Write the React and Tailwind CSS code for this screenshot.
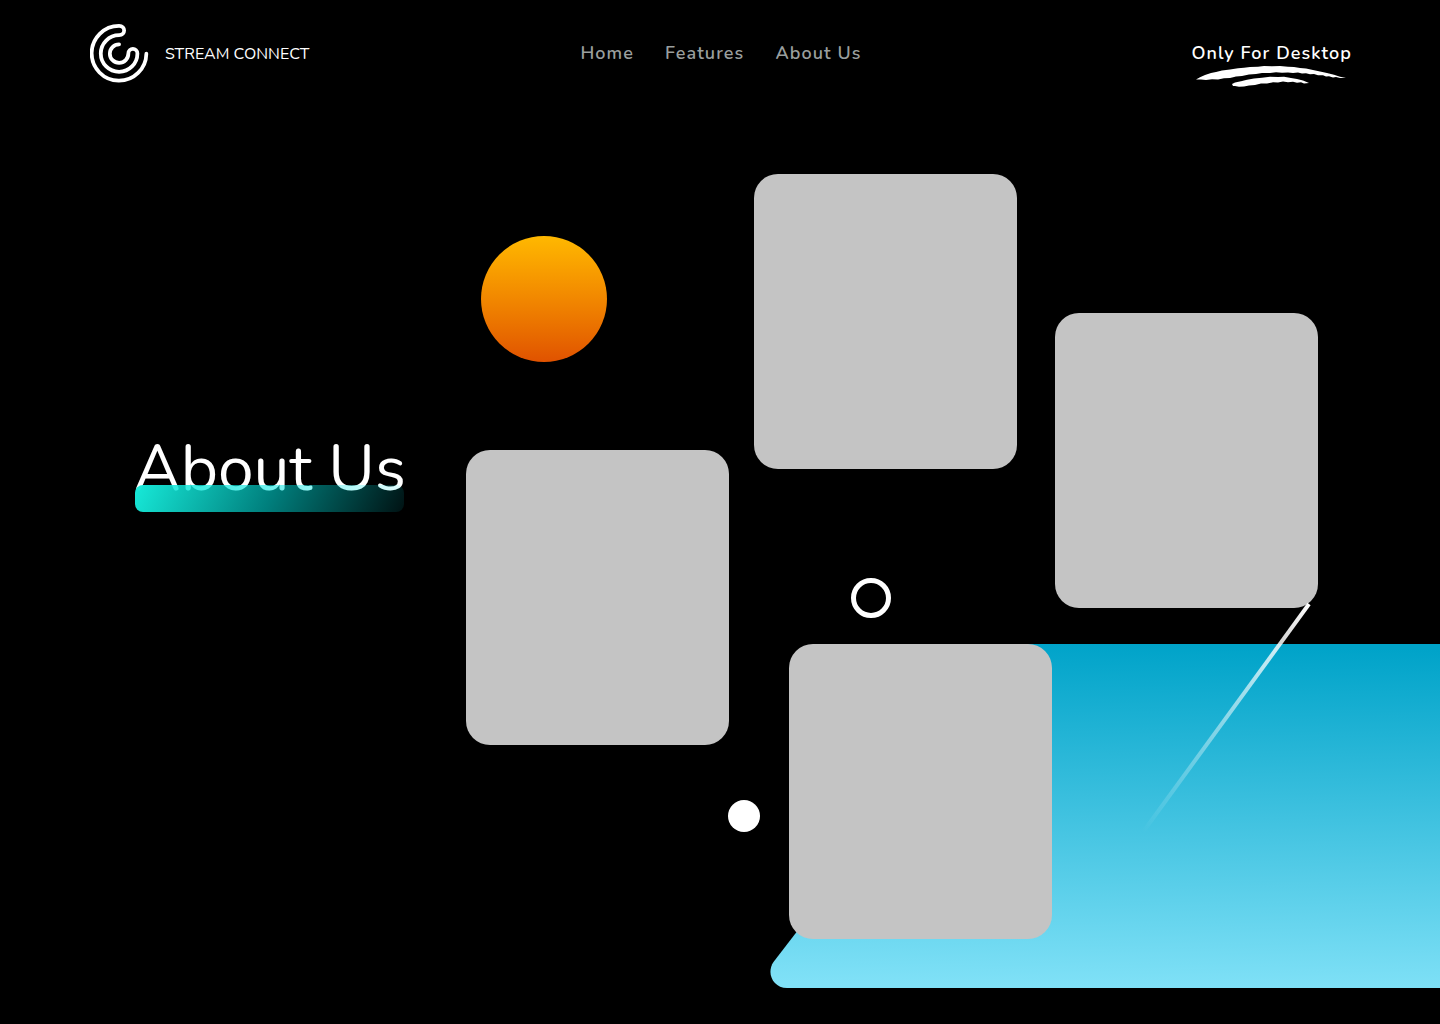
const navItems = [
  { label: "Home", href: "#home" },
  { label: "Features", href: "#features" },
  { label: "About Us", href: "#about" },
];

function LogoMark() {
  return (
    <svg
      viewBox="0 0 58 58"
      className="size-[59px]"
      fill="none"
      stroke="white"
      strokeWidth="3.7"
      strokeLinecap="round"
      aria-hidden="true"
    >
      <path d="M55.4 29.2A26.9 26.9 0 1 1 28.6 1.9C35.2 1.9 35.2 11 28.6 11A18 18 0 1 0 46.6 29C46.6 23 37.7 23 37.7 29A9.1 9.1 0 1 1 28.6 20" />
    </svg>
  );
}

function BrushStroke() {
  return (
    <svg
      viewBox="0 0 150 22"
      className="absolute left-[5px] top-full h-[22px] w-[150px]"
      fill="white"
      aria-hidden="true"
    >
      <path d="M0 13.6L4 11.2L9 9L15 7L20 6L26 4.6L34 3.4L42 2.2L48 1.8L54 1L62 .8L68 0L76 .3L84 .1L92 .7L98 1L104 2L110 2.6L117 4L124 5.4L131 7L138 8.8L144 10.8L150 12L144 12L140 11L137 11.4L133 10.2L130 10.6L127 9.2L122 9.2L118 8L114 8.2L110 7.2L106 7.6L102 6.6L97 7L92 6.4L86 6.8L80 6.2L74 7L66 7L60 8L53 8.6L46 10L40 10.6L34 12L28 12.2L22 13.4L16 13.2L10 14L5 13.6Z" />
      <path d="M36 18L39 16.4L45 15.2L51 13.8L58 12.6L66 11.8L74 10.8L82 11L88 10.8L95 12L101 13L107 14.6L113 17L108 17.4L105 16.2L101 16.8L97 15.8L92 16.2L87 15.6L82 16.4L77 16.2L71 17.6L65 17.6L59 19L53 19.4L48 20.6L43 20.8L39 20L37 20Z" />
    </svg>
  );
}

function Header() {
  return (
    <header className="grid grid-cols-[1fr_auto_1fr] items-center pl-[90px] pr-[88px] pt-6">
      <a href="#home" className="flex items-center gap-4 justify-self-start">
        <LogoMark />
        <span className="text-base leading-6">STREAM CONNECT</span>
      </a>
      <nav className="flex gap-[31px] text-lg leading-[25px] font-semibold tracking-[0.06em] text-[#9a9f9e]">
        {navItems.map((item) => (
          <a key={item.label} href={item.href}>
            {item.label}
          </a>
        ))}
      </nav>
      <div className="relative justify-self-end text-lg leading-[25px] font-semibold tracking-[0.06em]">
        Only For Desktop
        <BrushStroke />
      </div>
    </header>
  );
}

function Card({ className = "" }) {
  return <div className={`h-[295px] w-[263px] rounded-3xl bg-[#c4c4c4] ${className}`} />;
}

function BluePanel() {
  return (
    <svg
      viewBox="0 0 670 344"
      className="absolute right-0 top-[561px] h-[344px] w-[670px]"
      aria-hidden="true"
    >
      <defs>
        <linearGradient id="panel" x1="338" y1="0" x2="332" y2="344" gradientUnits="userSpaceOnUse">
          <stop stopColor="#00a3c9" />
          <stop offset="1" stopColor="#80e1f7" />
        </linearGradient>
      </defs>
      <path
        fill="url(#panel)"
        d="M670 0H258C251 0 246 3 242 8L3.5 318C-4 329 3 344 17 344H670Z"
      />
    </svg>
  );
}

function SlantedLine() {
  return (
    <svg
      viewBox="0 0 172 232"
      className="absolute right-[127px] top-[519px] h-[232px] w-[172px]"
      aria-hidden="true"
    >
      <defs>
        <linearGradient id="beam" x1="168" y1="2" x2="2" y2="230" gradientUnits="userSpaceOnUse">
          <stop stopColor="white" />
          <stop offset="1" stopColor="white" stopOpacity="0" />
        </linearGradient>
      </defs>
      <path d="M168 2L2 230" stroke="url(#beam)" strokeWidth="4" />
    </svg>
  );
}

export default function App() {
  return (
    <div className="min-h-screen overflow-hidden bg-black font-['Nunito','Lato',sans-serif] text-white">
      <Header />
      <main className="relative flex justify-between pl-[134px] pr-[122px] pb-[85px]">
        <BluePanel />
        <div className="relative mt-[346px] self-start">
          <h1 className="text-[64px] leading-[80px] font-normal whitespace-nowrap">About Us</h1>
          <div className="absolute left-px right-0.5 top-14 h-[27px] rounded-lg bg-linear-115/srgb from-[#17ead9] via-[#00e8e4]/55 to-[#00e5f0]/8" />
        </div>
        <div className="relative flex">
          <div className="mr-[25px] w-[263px] pt-[153px]">
            <div className="ml-[15px] size-[126px] rounded-full bg-linear-to-b from-[#ffb800] to-[#e05200]" />
            <Card className="mt-[88px]" />
            <div className="ml-[262px] mt-[55px] size-8 rounded-full bg-white" />
          </div>
          <div className="mr-[38px] w-[263px] pt-[91px]">
            <Card />
            <div className="ml-[97px] mt-[109px] size-10 rounded-full border-5 border-white" />
            <Card className="ml-[35px] mt-[26px]" />
          </div>
          <div className="w-[263px] pt-[230px]">
            <Card />
          </div>
        </div>
        <SlantedLine />
      </main>
    </div>
  );
}
